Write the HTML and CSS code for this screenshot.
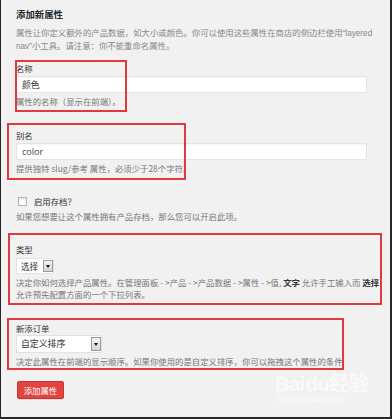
FILE: index.html
```html
<!DOCTYPE html>
<html lang="zh-CN">
<head>
<meta charset="utf-8">
<title>添加新属性</title>
<link rel="stylesheet" href="styles.css">
</head>
<body>
<div class="page">
  <h2 class="title">添加新属性</h2>
  <p class="desc">属性让你定义额外的产品数据，如大小或颜色。你可以使用这些属性在商店的侧边栏使用<span class="latin-q">“layered</span> <span class="latin-q">nav”</span>小工具。请注意：你不能重命名属性。</p>

  <div class="field f-name">
    <label class="label">名称</label>
    <div class="input">颜色</div>
    <p class="help">属性的名称（显示在前端）。</p>
  </div>

  <div class="field f-slug">
    <label class="label">别名</label>
    <div class="input latin">color</div>
    <p class="help">提供独特 slug/参考 属性，必须少于28个字符。</p>
  </div>

  <div class="field f-archive">
    <div class="check-row"><span class="checkbox"></span><span class="check-label">启用存档？</span></div>
    <p class="help">如果您想要让这个属性拥有产品存档，那么您可以开启此项。</p>
  </div>

  <div class="field f-type">
    <label class="label">类型</label>
    <div class="select select-small"><span class="select-text">选择</span><span class="select-arrow"></span></div>
    <p class="help">决定你如何选择产品属性。在管理面板 - &gt;产品 - &gt;产品数据 - &gt;属性 - &gt;值, <b>文字</b> 允许手工输入而 <b>选择</b><br>允许预先配置方面的一个下拉列表。</p>
  </div>

  <div class="field f-order">
    <label class="label">新添订单</label>
    <div class="select select-wide"><span class="select-text">自定义排序</span><span class="select-arrow"></span></div>
    <p class="help">决定此属性在前端的显示顺序。如果你使用的是自定义排序，你可以拖拽这个属性的条件</p>
  </div>

  <button class="button">添加属性</button>
</div>

<div class="mark mark-1"></div>
<div class="mark mark-2"></div>
<div class="mark mark-3"></div>
<div class="mark mark-4"></div>

<div class="watermark"><span class="wm-logo">Bai<span class="wm-du">du</span>经验</span><span class="wm-url">jingyan.baidu.com</span></div>
</body>
</html>
```

FILE: styles.css
```css
html {
  background: #262626;
  margin: 0;
  padding: 0;
}
body {
  position: relative;
  margin: 0 2px 2px 1px;
  height: 417px;
  background: #f1f1f1;
  font-family: "Noto Sans CJK SC", "Noto Sans", sans-serif;
  font-size: 8.4px;
  color: #444;
  overflow: hidden;
}
.page {
  padding: 8px 0 0 15px;
  display: flex;
  flex-direction: column;
  align-items: flex-start;
}
.title {
  margin: 0;
  font-size: 9.4px;
  line-height: 12px;
  font-weight: bold;
  color: #23282d;
}
.desc {
  margin: 6px 0 0;
  width: 362px;
  line-height: 12px;
  color: #888;
}
.latin-q {
  font-family: "Liberation Sans", sans-serif;
  font-size: 8.2px;
  line-height: 10px;
}
.field {
  display: flex;
  flex-direction: column;
  align-items: flex-start;
}
.f-name { margin-top: 10px; }
.f-slug { margin-top: 22px; }
.f-archive { margin-top: 21px; }
.f-type { margin-top: 21px; }
.f-order { margin-top: 22px; }
.label {
  line-height: 12px;
  color: #333;
}
.input {
  box-sizing: border-box;
  margin-top: 2px;
  width: 351px;
  height: 17px;
  padding: 0 5px;
  line-height: 16px;
  font-size: 8.8px;
  background: #fff;
  border: 1px solid #e4e4e4;
  box-shadow: inset 0 1px 1px rgba(0,0,0,0.04);
  color: #333;
}
.input.latin { font-family: "Open Sans", "Noto Sans", sans-serif; font-size: 9px; color: #444; }
.help {
  margin: 2px 0 0;
  line-height: 12px;
  color: #777;
}
.help b { color: #333; }
.check-row {
  display: flex;
  align-items: center;
  height: 12px;
  padding-left: 2px;
}
.checkbox {
  box-sizing: border-box;
  width: 9px;
  height: 9px;
  background: #fff;
  border: 1px solid #b4b4b4;
  box-shadow: inset 0 1px 2px rgba(0,0,0,0.12);
}
.check-label {
  margin-left: 7px;
  color: #333;
}
.f-archive .help { margin-top: 3px; }
.select {
  box-sizing: border-box;
  display: flex;
  align-items: center;
  background: #fff;
  border: 1px solid #e2e2e2;
  color: #333;
}
.select-small { width: 38px; height: 16px; margin-top: 3px; }
.select-wide { width: 86px; height: 18px; margin-top: 1px; }
.select-text {
  flex: 1;
  padding-left: 4px;
  font-size: 8.6px;
  line-height: 14px;
}
.select-wide .select-text { font-size: 8.9px; }
.select-arrow {
  position: relative;
  box-sizing: border-box;
  align-self: stretch;
  width: 10px;
  margin: 1px 0;
  border: 1px solid #9a9a9a;
  background: linear-gradient(#f4f4f4, #d6d6d6);
}
.select-arrow::after {
  content: "";
  position: absolute;
  left: 50%;
  top: 50%;
  margin: -1px 0 0 -2.5px;
  border-left: 2.5px solid transparent;
  border-right: 2.5px solid transparent;
  border-top: 3px solid #111;
}
.f-type .help { margin-top: 2px; }
.button {
  margin-top: 14px;
  margin-left: 1px;
  width: 47px;
  height: 18px;
  padding: 0;
  font-family: inherit;
  font-size: 8.4px;
  color: #fff;
  background: #e0463f;
  border: 1px solid #c9342e;
  border-radius: 2px;
  box-shadow: 0 1px 0 rgba(0,0,0,0.08);
}
.mark {
  position: absolute;
  box-sizing: border-box;
  border: 2px solid #e2393f;
  pointer-events: none;
}
.mark-1 { left: 14px; top: 60px; width: 112px; height: 52px; }
.mark-2 { left: 6px; top: 123px; width: 179px; height: 57px; }
.mark-3 { left: 7px; top: 233px; width: 374px; height: 72px; }
.mark-4 { left: 6px; top: 318px; width: 337px; height: 52px; }
.watermark {
  position: absolute;
  left: 274px;
  top: 374px;
  display: flex;
  flex-direction: column;
  align-items: flex-start;
  color: rgba(255,255,255,0.65);
  pointer-events: none;
}
.wm-logo {
  font-family: "Liberation Sans", sans-serif;
  font-size: 20px;
  font-weight: bold;
  line-height: 20px;
  letter-spacing: -0.5px;
}
.wm-du { margin-left: 1px; }
.wm-url {
  margin-left: 2px;
  font-family: "Liberation Sans", sans-serif;
  font-size: 9px;
  line-height: 10px;
}
```
